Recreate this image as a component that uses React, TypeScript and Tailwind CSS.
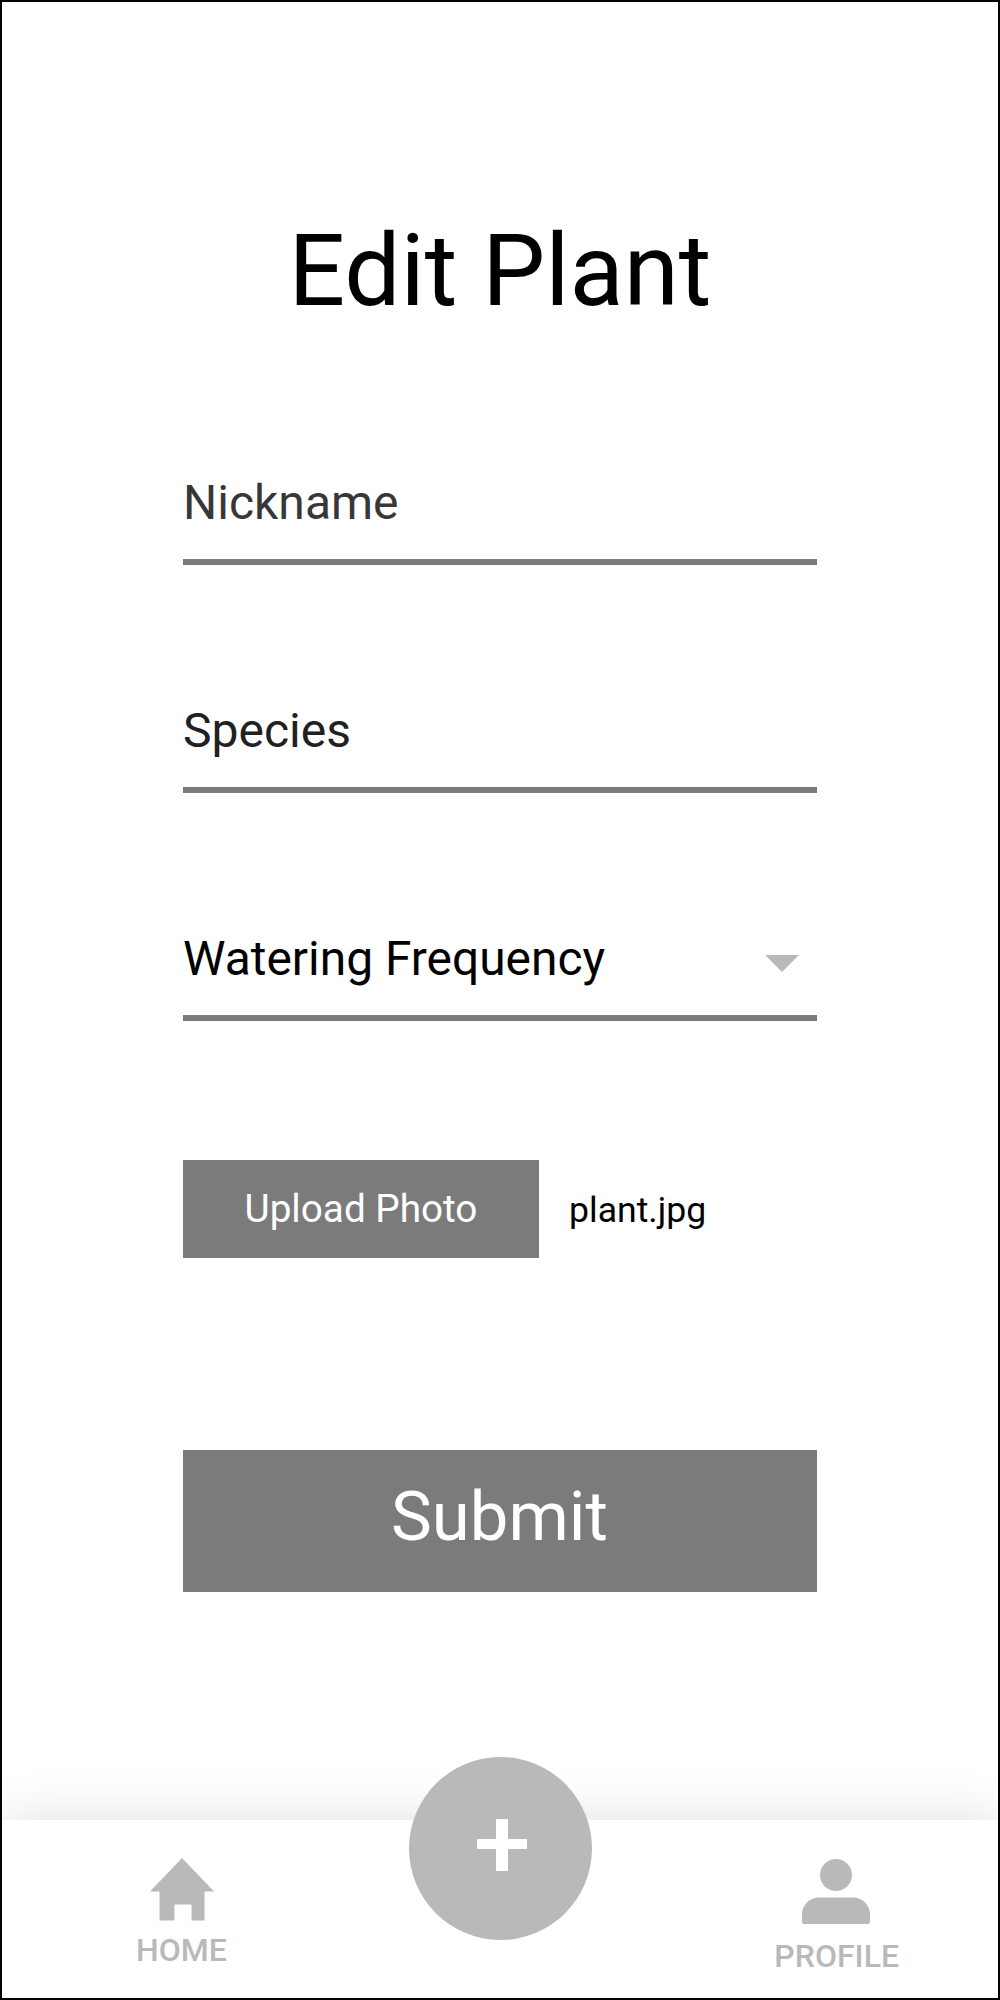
function HomeIcon() {
  return (
    <svg width="64" height="63" viewBox="0 0 64 63" fill="#b9b9b9" className="block">
      <path d="M32 0L64 33.5H54.5V62.5H41.5V46.5H24.5V62.5H9.5V33.5H0Z" />
    </svg>
  );
}

function ProfileIcon() {
  return (
    <svg width="68" height="65" viewBox="0 0 68 65" fill="#b9b9b9" className="block">
      <circle cx="34" cy="16" r="16" />
      <path d="M17 38.5H51A17 17 0 0 1 68 55.5V63Q68 65 66 65H2Q0 65 0 63V55.5A17 17 0 0 1 17 38.5Z" />
    </svg>
  );
}

export default function App() {
  return (
    <div className="flex h-[2000px] w-[1000px] flex-col overflow-hidden border-2 border-black bg-white font-['Roboto',sans-serif]">
      <main className="flex h-[1818px] shrink-0 flex-col px-[181px]">
        <h1 className="mt-[209px] text-center text-[99.8px] leading-[120px] text-black">Edit Plant</h1>
        <form className="flex flex-col items-stretch">
          <div className="mt-[125px] flex h-[109px] items-center border-b-[6px] border-[#7b7b7b] pb-[10px] text-[48px] text-[#373737]">Nickname</div>
          <div className="mt-[119px] flex h-[109px] items-center border-b-[6px] border-[#7b7b7b] pb-[10px] text-[48px] text-[#212121]">Species</div>
          <div className="mt-[119px] flex h-[109px] items-center justify-between border-b-[6px] border-[#7b7b7b] pr-[18px] pb-[10px] text-[47.9px] text-black">
            <span className="leading-[72px]">Watering Frequency</span>
            <svg width="34" height="17" viewBox="0 0 34 17" fill="#b9b9b9" className="mt-[9px]">
              <path d="M0 0H34L17 17Z" />
            </svg>
          </div>
          <div className="mt-[139px] flex items-center gap-[30px]">
            <div className="flex h-[98px] w-[356px] items-center justify-center bg-[#7b7b7b] text-[38.7px] text-white">Upload Photo</div>
            <span className="pt-[3px] text-[35.6px] text-black">plant.jpg</span>
          </div>
          <button type="button" className="mt-[192px] flex h-[142px] items-center justify-center bg-[#7b7b7b] pr-px pb-[9px] text-[68.8px] text-white">Submit</button>
        </form>
      </main>
      <nav className="relative flex grow items-start justify-between bg-white pr-[99px] pl-[134px] text-[32px] leading-[38px] font-medium text-[#b9b9b9] shadow-[4px_0_50px_rgba(0,0,0,0.13)]">
        <div className="flex flex-col items-center pt-[38px]">
          <div className="pl-[2px]">
            <HomeIcon />
          </div>
          <span className="mt-[10px]">HOME</span>
        </div>
        <div className="absolute -top-[63px] left-[407px] flex size-[183px] items-center justify-center rounded-full bg-[#b9b9b9]">
          <svg width="50" height="52" viewBox="0 0 50 52" fill="white" className="relative -top-[4px] left-px">
            <path d="M19 0H31V20H50V30H31V52H19V30H0V20H19Z" />
          </svg>
        </div>
        <div className="flex flex-col items-center pt-[39px]">
          <div className="pr-[2px]">
            <ProfileIcon />
          </div>
          <span className="mt-[13px]">PROFILE</span>
        </div>
      </nav>
    </div>
  );
}
